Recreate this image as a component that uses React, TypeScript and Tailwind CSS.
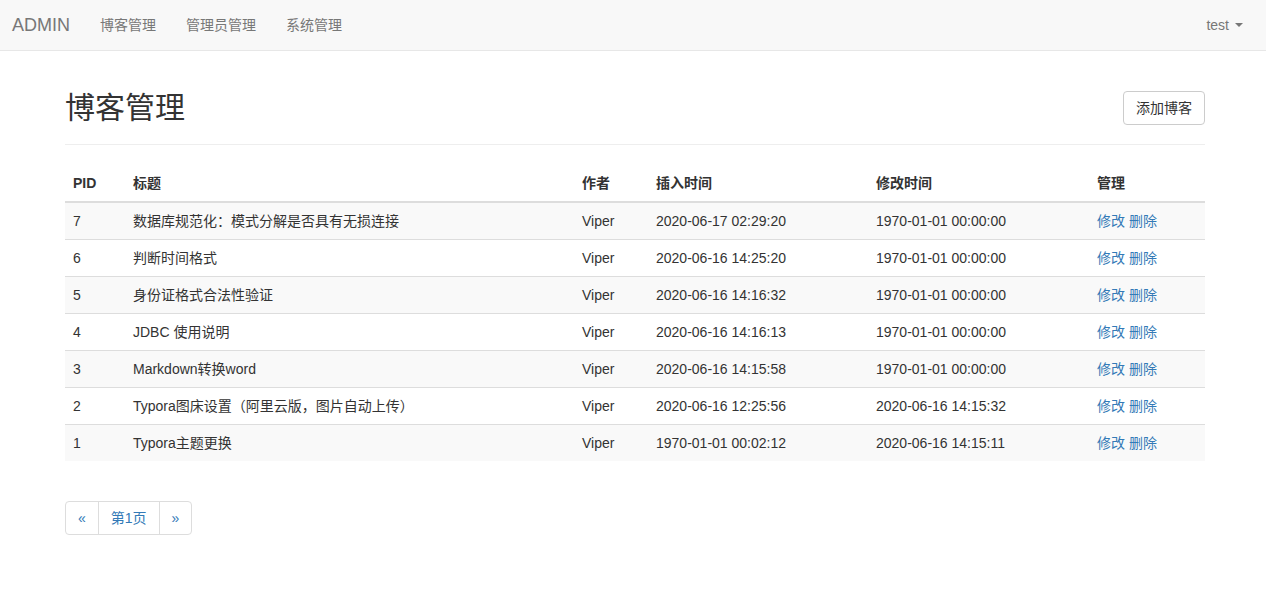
const rows = [
  { pid: 7, title: "数据库规范化：模式分解是否具有无损连接", author: "Viper", created: "2020-06-17 02:29:20", updated: "1970-01-01 00:00:00" },
  { pid: 6, title: "判断时间格式", author: "Viper", created: "2020-06-16 14:25:20", updated: "1970-01-01 00:00:00" },
  { pid: 5, title: "身份证格式合法性验证", author: "Viper", created: "2020-06-16 14:16:32", updated: "1970-01-01 00:00:00" },
  { pid: 4, title: "JDBC 使用说明", author: "Viper", created: "2020-06-16 14:16:13", updated: "1970-01-01 00:00:00" },
  { pid: 3, title: "Markdown转换word", author: "Viper", created: "2020-06-16 14:15:58", updated: "1970-01-01 00:00:00" },
  { pid: 2, title: "Typora图床设置（阿里云版，图片自动上传）", author: "Viper", created: "2020-06-16 12:25:56", updated: "2020-06-16 14:15:32" },
  { pid: 1, title: "Typora主题更换", author: "Viper", created: "1970-01-01 00:02:12", updated: "2020-06-16 14:15:11" },
];

const font = "font-['Liberation_Sans','Noto_Sans_CJK_SC',sans-serif]";

export default function App() {
  return (
    <div className={`min-h-[592px] bg-white text-[14px] leading-[20px] text-[#333] ${font}`}>
      {/* Navbar */}
      <nav className="flex h-[51px] items-start justify-between border-b border-[#e7e7e7] bg-[#f8f8f8] pr-[8px]">
        <div className="flex">
          <a className="block py-[15px] pl-[12px] pr-[15px] text-[18px] leading-[20px] text-[#777]">ADMIN</a>
          <a className="block px-[15px] py-[15px] text-[#777]">博客管理</a>
          <a className="block px-[15px] py-[15px] text-[#777]">管理员管理</a>
          <a className="block px-[15px] py-[15px] text-[#777]">系统管理</a>
        </div>
        <a className="flex items-center px-[15px] py-[15px] text-[#777]">
          test
          <span className="ml-[6px] inline-block h-0 w-0 border-x-[4px] border-t-[4px] border-x-transparent border-t-[#777]" />
        </a>
      </nav>

      {/* Content */}
      <div className="ml-[65px] w-[1140px]">
        <div className="mt-[40px] flex items-start justify-between border-b border-[#eee] pb-[19px]">
          <h1 className="text-[30px] leading-[33px] font-normal">博客管理</h1>
          <button className="rounded-[4px] border border-[#ccc] bg-white px-[12px] py-[6px] text-[14px] leading-[20px] text-[#333]">
            添加博客
          </button>
        </div>

        <table className="mt-[20px] w-full">
          <thead>
            <tr>
              <th className="w-[60px] border-b-2 border-[#ddd] p-[8px] text-left font-bold">PID</th>
              <th className="w-[449px] border-b-2 border-[#ddd] p-[8px] text-left font-bold">标题</th>
              <th className="w-[74px] border-b-2 border-[#ddd] p-[8px] text-left font-bold">作者</th>
              <th className="w-[220px] border-b-2 border-[#ddd] p-[8px] text-left font-bold">插入时间</th>
              <th className="w-[221px] border-b-2 border-[#ddd] p-[8px] text-left font-bold">修改时间</th>
              <th className="border-b-2 border-[#ddd] p-[8px] text-left font-bold">管理</th>
            </tr>
          </thead>
          <tbody>
            {rows.map((r, i) => (
              <tr key={r.pid} className={i % 2 === 0 ? "bg-[#f9f9f9]" : "bg-white"}>
                <td className="border-t border-[#ddd] p-[8px]">{r.pid}</td>
                <td className="border-t border-[#ddd] p-[8px]">{r.title}</td>
                <td className="border-t border-[#ddd] p-[8px]">{r.author}</td>
                <td className="border-t border-[#ddd] p-[8px]">{r.created}</td>
                <td className="border-t border-[#ddd] p-[8px]">{r.updated}</td>
                <td className="border-t border-[#ddd] p-[8px]">
                  <a className="text-[#337ab7]">修改</a> <a className="text-[#337ab7]">删除</a>
                </td>
              </tr>
            ))}
          </tbody>
        </table>

        {/* Pagination */}
        <ul className="mt-[40px] flex">
          <li>
            <a className="block rounded-l-[4px] border border-[#ddd] px-[12px] py-[6px] text-[#337ab7]">«</a>
          </li>
          <li>
            <a className="-ml-px block border border-[#ddd] px-[12px] py-[6px] text-[#337ab7]">第1页</a>
          </li>
          <li>
            <a className="-ml-px block rounded-r-[4px] border border-[#ddd] px-[12px] py-[6px] text-[#337ab7]">»</a>
          </li>
        </ul>
      </div>
    </div>
  );
}
